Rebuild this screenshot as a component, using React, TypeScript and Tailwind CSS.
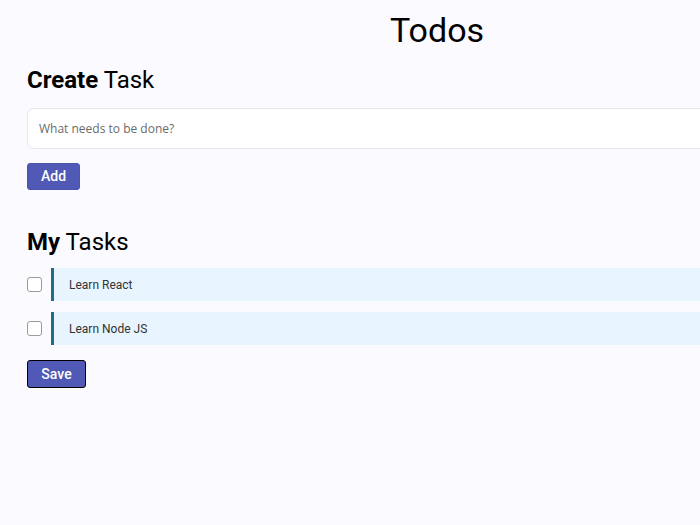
import { useState } from "react";

type Task = { id: number; title: string; done: boolean };

const initialTasks: Task[] = [
  { id: 1, title: "Learn React", done: false },
  { id: 2, title: "Learn Node JS", done: false },
];

export default function App() {
  const [tasks, setTasks] = useState<Task[]>(initialTasks);
  const [text, setText] = useState("");

  const addTask = () => {
    if (!text.trim()) return;
    setTasks([...tasks, { id: Date.now(), title: text.trim(), done: false }]);
    setText("");
  };

  const toggle = (id: number) => {
    setTasks(tasks.map((t) => (t.id === id ? { ...t, done: !t.done } : t)));
  };

  return (
    <div className="min-h-[525px] w-[700px] overflow-hidden bg-[#fafaff] font-['Roboto',sans-serif]">
      <div className="w-[874px] px-[27px] pt-[8px]">
        <h1 className="text-center text-[34px] leading-[44px] text-black">Todos</h1>

        <h2 className="mt-[12px] text-[24px] leading-[32px] text-black">
          <span className="font-bold">Create</span> Task
        </h2>
        <input
          value={text}
          onChange={(e) => setText(e.target.value)}
          placeholder="What needs to be done?"
          className="mt-[12px] block h-[41px] w-full rounded-[7px] border border-[#e6e6ec] bg-white px-[11px] font-['Open_Sans',sans-serif] text-[12px] text-[#333] outline-none placeholder:text-[#6b6b6b]"
        />
        <button
          type="button"
          onClick={addTask}
          className="mt-[14px] h-[27px] w-[53px] rounded-[3px] border border-[#4a54ad] bg-[#5059b5] text-[14px] font-medium text-white"
        >
          Add
        </button>

        <h2 className="mt-[36px] text-[24px] leading-[32px] text-black">
          <span className="font-bold">My</span> Tasks
        </h2>
        <div className="mt-[10px] flex flex-col gap-[11px]">
          {tasks.map((t) => (
            <div key={t.id} className="flex items-center">
              <input
                type="checkbox"
                checked={t.done}
                onChange={() => toggle(t.id)}
                className="h-[15px] w-[15px] appearance-none rounded-[3px] border border-[#9a9a9a] bg-white checked:bg-[#5059b5]"
              />
              <div className="ml-[9px] flex h-[33px] flex-1 items-center border-l-[3px] border-[#1e6b8a] bg-[#e8f5fe] pl-[15px] text-[12px] text-[#333]">
                {t.title}
              </div>
            </div>
          ))}
        </div>
        <button
          type="button"
          className="mt-[15px] h-[28px] w-[59px] rounded-[3px] border border-black bg-[#5059b5] text-[14px] font-medium text-white"
        >
          Save
        </button>
      </div>
    </div>
  );
}
